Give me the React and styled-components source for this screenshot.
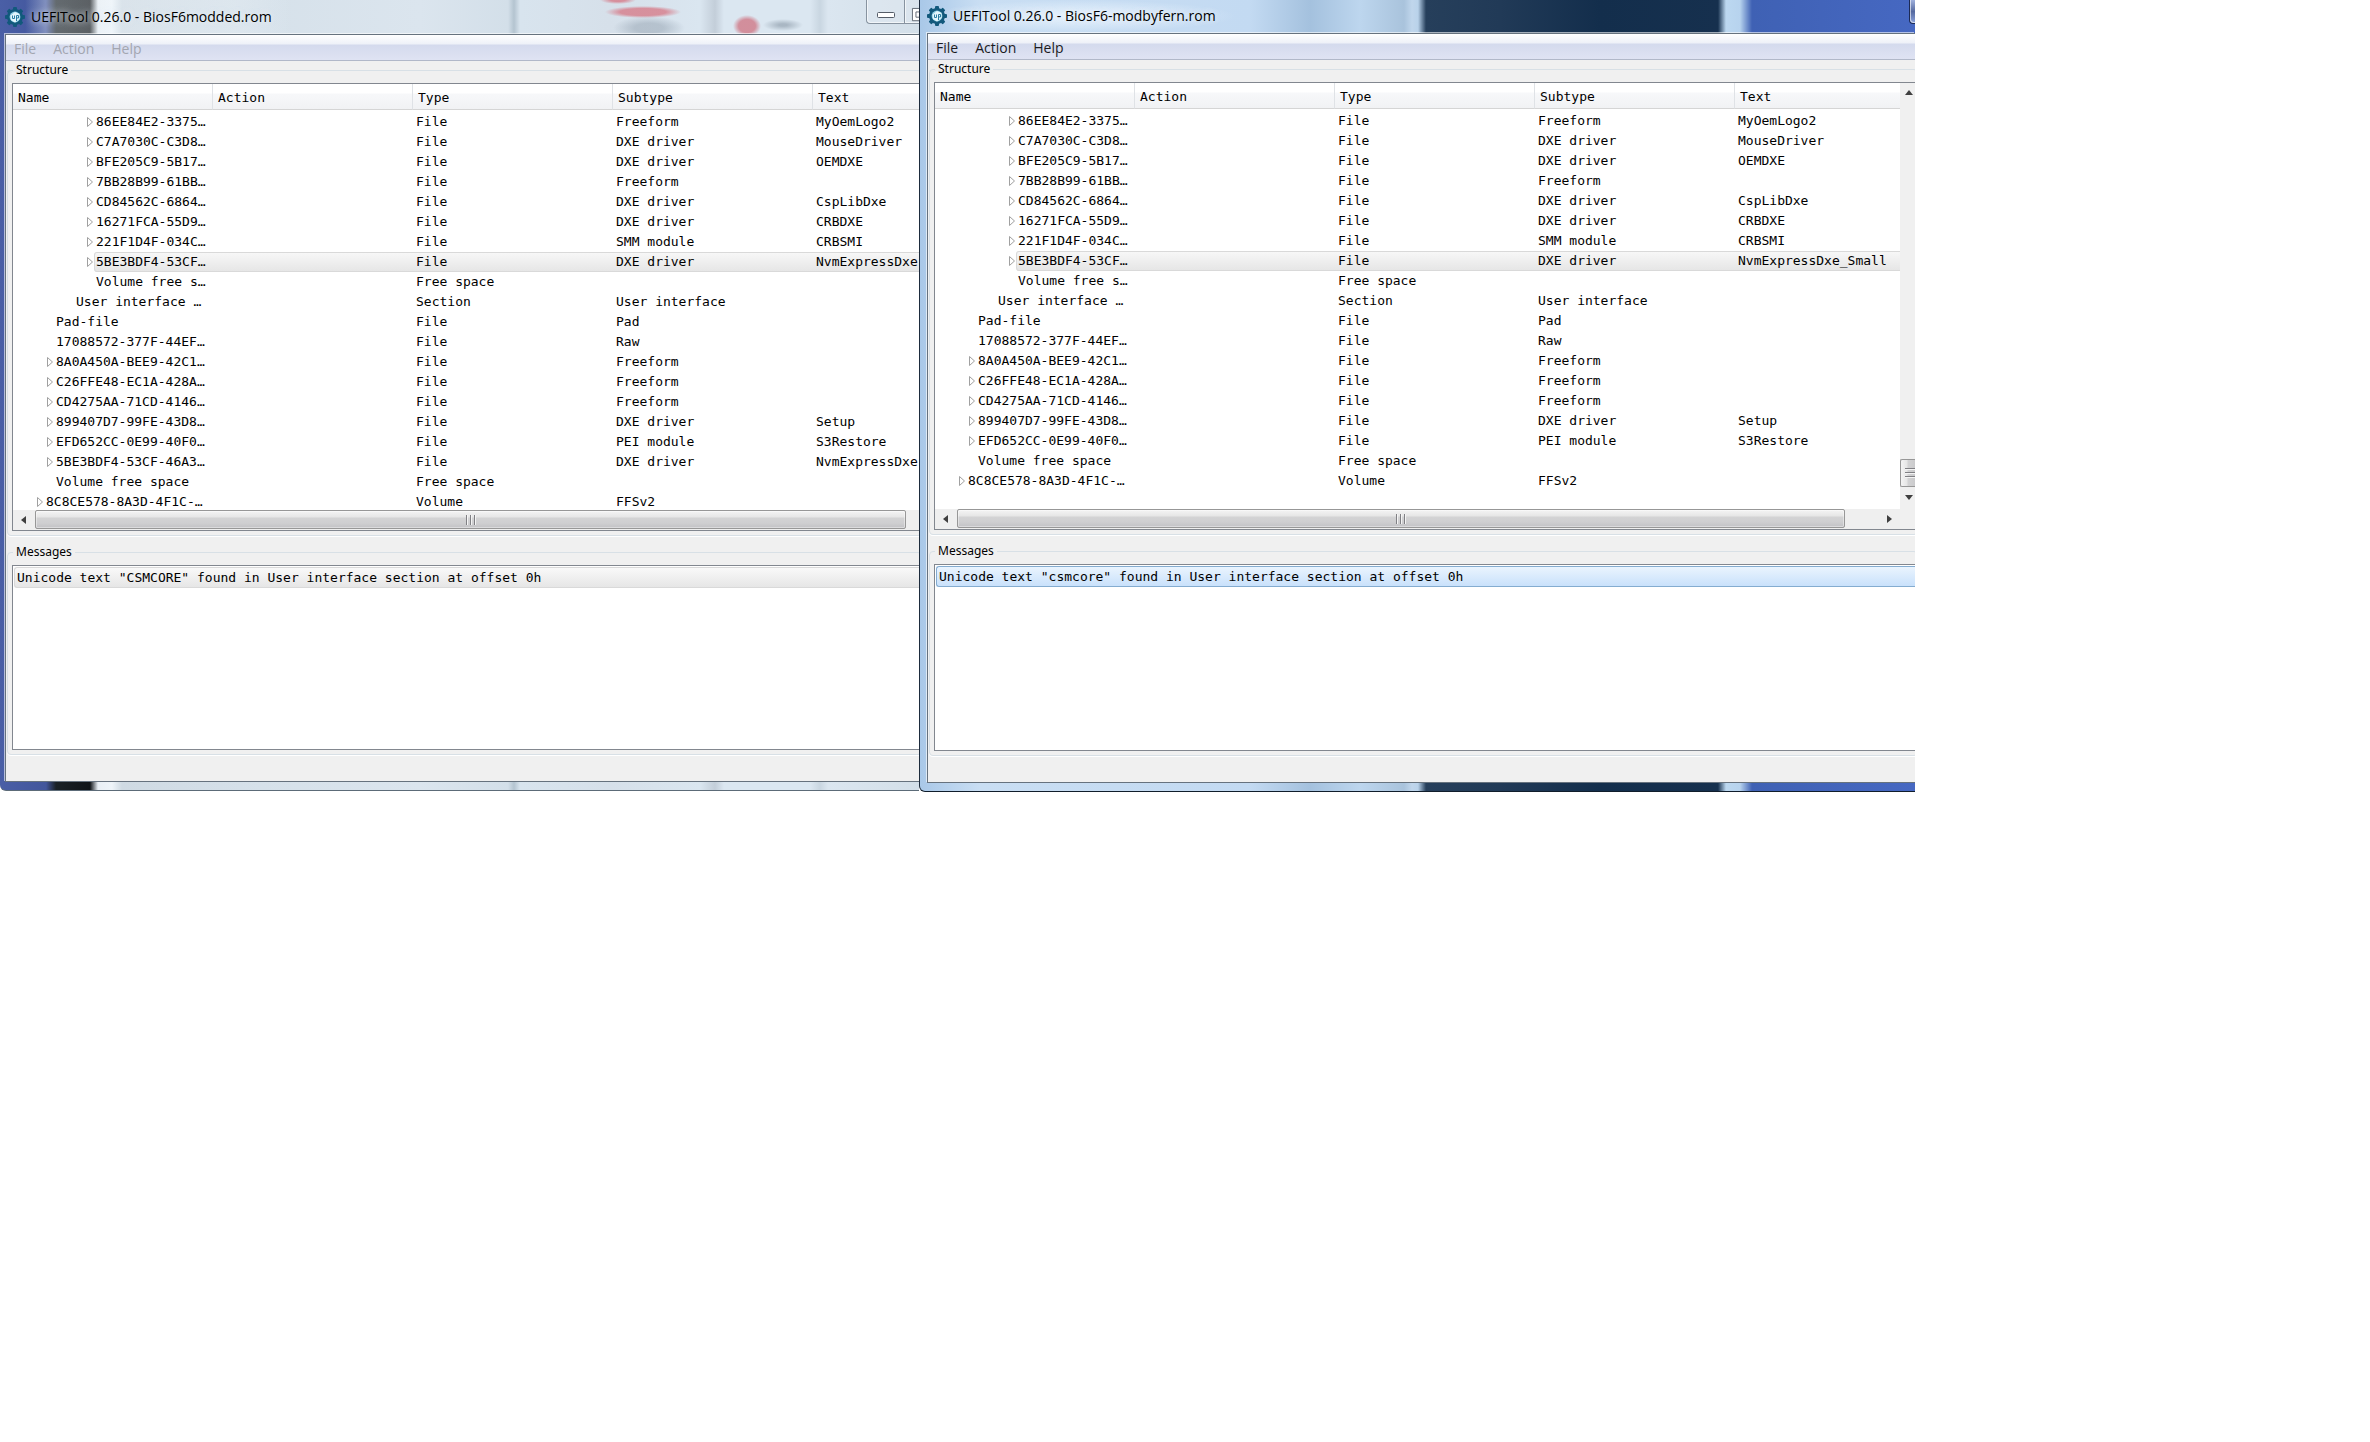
import React from 'react';
import styled, { createGlobalStyle } from 'styled-components';

const MONO = '"DejaVu Sans Mono", monospace';
const UI = '"Open Sans", "Noto Sans", sans-serif';
const LABEL = '"Noto Sans", sans-serif';

const GlobalStyle = createGlobalStyle`
  * { box-sizing: border-box; }
  body { margin: 0; background: #fff; color: #000; font-family: ${UI}; }
`;

const Desktop = styled.main`
  display: grid;
  grid-template-columns: 919fr 996fr 455fr;
  align-items: start;
`;

const GLASS_IDLE = `linear-gradient(90deg, #4a5fa6 0, #42569c 46px, #1a2126 56px, #101418 90px,
  #e9eff5 98px, #eef4f9 112px, #cfdae3 122px, #d6e1ea 260px, #dbe5ee 420px, #d3dfe9 508px,
  #b4c4d0 514px, #d8e4ee 520px, #d6e0ea 610px, #dae6f0 700px, #c3ced9 715px, #dbe7f1 724px,
  #dbe7f1 810px, #c9d6e1 820px, #dbe6f0 828px, #d3dfe9 100%)`;
const GLASS_ACTIVE = `linear-gradient(90deg, #a9c8e8 0, #c9def3 60px, #c3daf2 330px, #a4c1de 390px,
  #bdd6ee 440px, #a9c3dc 484px, #c0d6ec 492px, #b9d2ea 498px, #263f5b 506px, #213a57 580px,
  #132e4c 680px, #16304e 798px, #bcd8f0 806px, #b7d3ee 820px, #3f61b4 832px, #4668c2 100%)`;

const SMUDGES = `radial-gradient(ellipse 38px 6px at 638px 12px, rgba(214,90,105,.6) 60%, rgba(214,90,105,0)),
  radial-gradient(ellipse 18px 4px at 613px 0, rgba(214,90,105,.6) 40%, rgba(214,90,105,0)),
  radial-gradient(ellipse 36px 12px at 644px 28px, rgba(130,145,160,.4) 40%, rgba(130,145,160,0)),
  radial-gradient(ellipse 14px 11px at 742px 26px, rgba(205,95,110,.65) 60%, rgba(205,95,110,0)),
  radial-gradient(ellipse 20px 6px at 778px 25px, rgba(120,135,150,.5) 20%, rgba(120,135,150,0))`;

const Window = styled.section`
  display: flex;
  flex-direction: column;
  min-width: 0;
  height: ${p => (p.$active ? 792 : 791)}px;
  overflow: hidden;
  padding: 0 0 8px ${p => (p.$active ? 7 : 5)}px;
  border-left: ${p => (p.$active ? '1px solid #1d2b3c' : 'none')};
  border-bottom: ${p => (p.$active ? '1px solid #101d2b' : '1px solid #5c6b78')};
  border-bottom-left-radius: 6px;
  background: ${p => (p.$active ? GLASS_ACTIVE : GLASS_IDLE)};
`;

const TitleBar = styled.header`
  display: flex;
  flex: none;
  justify-content: space-between;
  align-items: flex-start;
  height: ${p => (p.$active ? 33 : 34)}px;
  background: ${p => (p.$active ? 'none' : SMUDGES)};
`;

const Caption = styled.div`
  display: flex;
  align-items: center;
  gap: 6px;
  height: ${p => (p.$active ? 32 : 34)}px;
  padding-right: 20px;
  background: ${p => (p.$active
    ? 'radial-gradient(closest-side, rgba(240,248,255,.85), rgba(240,248,255,0))'
    : 'linear-gradient(90deg, rgba(240,246,250,0) 20px, rgba(240,246,250,.35) 40px, rgba(240,246,250,.3) 80%, rgba(240,246,250,0))')};
`;

const Title = styled.h1`
  margin: 0;
  font: 400 14px/20px ${UI};
  white-space: nowrap;
  text-shadow: 0 0 6px rgba(235, 243, 250, .8), 0 0 10px rgba(235, 243, 250, .6);
`;

const CaptionButtons = styled.div`
  display: flex;
  height: 24px;
  overflow: hidden;
`;

const CaptionButton = styled.button`
  flex: none;
  display: flex;
  justify-content: center;
  align-items: center;
  width: ${p => p.$width}px;
  height: 24px;
  padding: 6px 0 0;
  overflow: hidden;
  border: 1px solid ${p => (p.$dark ? '#1c2a55' : '#8793a0')};
  border-width: 0 0 1px 1px;
  border-bottom-left-radius: ${p => (p.$first ? 4 : 0)}px;
  background: ${p => (p.$dark ? 'linear-gradient(#9fb0dc, #55699f 50%, #8ba2dc)' : 'rgba(226,234,242,.5)')};
  box-shadow: inset 1px -1px 0 rgba(255, 255, 255, .6);
`;

const Client = styled.div`
  display: flex;
  flex: 1;
  flex-direction: column;
  min-height: 0;
  border: 1px solid #66727e;
  border-right: 0;
  background: #f0f0f0;
  box-shadow: -1px -1px 0 rgba(255, 255, 255, .6);
`;

const MenuBar = styled.nav`
  display: flex;
  flex: none;
  gap: 1px;
  height: 26px;
  border-bottom: 1px solid #b1b8c9;
  background: linear-gradient(#fff 0, #eef1f8 9px, #d4daed 10px, #dfe3f3 100%);
`;

const MenuItem = styled.button`
  padding: 2px 8px 0;
  border: 0;
  background: none;
  color: ${p => (p.$dim ? '#a3a6b0' : '#1b1b1f')};
  font: 400 14px/22px ${UI};
`;

const Group = styled.fieldset`
  flex: none;
  min-width: 0;
  margin: 1px -3px 0 1px;
  padding: ${p => p.$top}px 0 4px 4px;
  border: 1px solid #d8e0e6;
  border-radius: 4px;
  box-shadow: 0 1px 0 #fff;
`;

const Legend = styled.legend`
  height: 16px;
  margin-left: 1px;
  padding: 0 3px;
  font: 400 12px/16px ${LABEL};
`;

const Messages = styled(Group)`
  margin-top: 8px;
`;

const Tree = styled.div`
  display: flex;
  border: 1px solid #82878f;
  border-right: 0;
  background: #fff;
`;

const TreeMain = styled.div`
  flex: 1;
  min-width: 0;
`;

const Viewport = styled.div`
  height: 426px;
  overflow: hidden;
`;

const Table = styled.table`
  width: 100%;
  table-layout: fixed;
  border-collapse: separate;
  border-spacing: 0;
  font: 400 13px/20px ${MONO};

  thead::after { content: ''; display: block; height: 2px; }
`;

const Column = styled.col`
  width: ${p => (p.$width ? `${p.$width}px` : 'auto')};
`;

const HeadCell = styled.th`
  height: 26px;
  padding: 3px 0 0 5px;
  border-right: 1px solid #dfe2e6;
  border-bottom: 1px solid #d5d5d5;
  background: linear-gradient(#fff 0, #fff 9px, #f7f8fa 10px, #f1f2f4 100%);
  text-align: left;
  font-weight: 400;

  &:last-child { border-right: 0; }
`;

const Cell = styled.td`
  height: 20px;
  padding: 0 0 0 3px;
  overflow: hidden;
  white-space: pre;
  ${p => p.$selected && `
    background: linear-gradient(#f8f8f8, #e5e5e5);
    box-shadow: inset 0 1px 0 #d9d9d9, inset 0 -1px 0 #d9d9d9;
  `}
`;

const NameCell = styled(Cell)`
  padding: 0 0 0 ${p => p.$depth * 10 + 13}px;
`;

const NameBox = styled.div`
  display: flex;
  align-items: center;
  height: 20px;
`;

const Expander = styled.span`
  display: flex;
  flex: none;
  width: 8px;
`;

const Label = styled.span`
  flex: 1;
  padding-left: 2px;
  ${p => p.$selected && `
    border-left: 1px solid #d9d9d9;
    border-radius: 3px 0 0 3px;
    padding-left: 1px;
    background: linear-gradient(#f8f8f8, #e5e5e5);
    box-shadow: inset 0 1px 0 #d9d9d9, inset 0 -1px 0 #d9d9d9;
  `}
`;

const HScroll = styled.div`
  display: flex;
  align-items: flex-start;
  height: 20px;
  background: #efefef;
`;

const ScrollButton = styled.button`
  display: flex;
  flex: none;
  justify-content: center;
  align-items: center;
  width: ${p => p.$width || 22}px;
  height: 19px;
  padding: 0;
  border: 0;
  background: none;
`;

const HThumb = styled.div`
  display: flex;
  flex: 1;
  justify-content: center;
  align-items: center;
  height: 19px;
  border: 1px solid #979797;
  border-radius: 2px;
  background: linear-gradient(#f4f4f4 0, #e6e6e6 6px, #d3d3d4 7px, #cfcfd1 12px, #c2c2c5 100%);
  box-shadow: inset 0 0 0 1px rgba(255, 255, 255, .4);
`;

const HTrackEnd = styled.div`
  flex: none;
  display: flex;
  justify-content: flex-end;
  width: ${p => p.$width}px;
`;

const VScroll = styled.div`
  display: flex;
  flex: none;
  flex-direction: column;
  width: 17px;
  padding: 0 0 23px 0;
  overflow: hidden;
  background: #f0f0f0;
`;

const VTrack = styled.div`
  flex: 1;
`;

const VThumb = styled.div`
  display: flex;
  align-items: center;
  height: 28px;
  padding-left: 4px;
  border: 1px solid #979797;
  border-right: 0;
  border-radius: 2px 0 0 2px;
  background: linear-gradient(90deg, #f4f4f4 0, #e6e6e6 6px, #d3d3d4 7px, #c8c8ca 100%);
`;

const MessageList = styled.ul`
  height: ${p => p.$height}px;
  margin: 0;
  padding: 1px 0 0 1px;
  border: 1px solid #82878f;
  border-right: 0;
  background: #fff;
  list-style: none;
`;

const MessageItem = styled.li`
  height: 21px;
  padding-left: 2px;
  border: 1px solid ${p => (p.$active ? '#84acd0' : '#d9d9d9')};
  border-right: 0;
  border-radius: 3px 0 0 3px;
  background: ${p => (p.$active
    ? 'linear-gradient(#eaf4fe, #c9e1fb)'
    : 'linear-gradient(#f9f9f9, #e6e6e6)')};
  font: 400 13px/19px ${MONO};
  white-space: pre;
`;

const GearIcon = () => (
  <svg width="20" height="20" viewBox="0 0 20 20" aria-hidden="true">
    <g fill="#12597c">
      {[0, 45, 90, 135].map(a => (
        <rect key={a} x="8" y="0" width="4" height="20" rx="1" transform={`rotate(${a} 10 10)`} />
      ))}
      <circle cx="10" cy="10" r="8" />
    </g>
    <circle cx="10" cy="10" r="5.4" fill="#8fd0e6" />
    <path d="M5.500 8.500L10 5l4.500 2v5L10 15.500 6 13z" fill="#e4f6fc" />
    <path d="M7.500 8.500v3h2v-3M11.500 14V8.500h2v2.500h-2" fill="none" stroke="#2b7fa3" />
  </svg>
);

const Triangle = () => (
  <svg width="8" height="12" viewBox="0 0 8 12" aria-hidden="true">
    <path d="M1.500 1.500v9L6.500 6z" fill="#fff" stroke="#a0a0a0" />
  </svg>
);

const ARROWS = {
  left: 'M7 1v8L2 5z',
  right: 'M3 1v8l5-4z',
  up: 'M1 7h8L5 2z',
  down: 'M1 3h8L5 8z',
};

const Arrow = ({ dir }) => (
  <svg width="10" height="10" viewBox="0 0 10 10" aria-hidden="true">
    <path d={ARROWS[dir]} fill="#3f3f3f" />
  </svg>
);

const Grip = ({ vertical }) => (
  <svg width="12" height="12" viewBox="0 0 12 12" aria-hidden="true">
    <path
      d={vertical ? 'M0 1.500h12M0 5.500h12M0 9.500h12' : 'M1.500 1v10M5.500 1v10M9.500 1v10'}
      stroke="#808084"
    />
    <path
      d={vertical ? 'M0 2.500h12M0 6.500h12M0 10.500h12' : 'M2.500 1v10M6.500 1v10M10.500 1v10'}
      stroke="#f4f4f4"
    />
  </svg>
);

const row = (depth, open, name, type, subtype = '', text = '') => ({ depth, open, name, type, subtype, text });

const commonRows = selectedText => [
  row(6, true, '86EE84E2-3375…', 'File', 'Freeform', 'MyOemLogo2'),
  row(6, true, 'C7A7030C-C3D8…', 'File', 'DXE driver', 'MouseDriver'),
  row(6, true, 'BFE205C9-5B17…', 'File', 'DXE driver', 'OEMDXE'),
  row(6, true, '7BB28B99-61BB…', 'File', 'Freeform'),
  row(6, true, 'CD84562C-6864…', 'File', 'DXE driver', 'CspLibDxe'),
  row(6, true, '16271FCA-55D9…', 'File', 'DXE driver', 'CRBDXE'),
  row(6, true, '221F1D4F-034C…', 'File', 'SMM module', 'CRBSMI'),
  { ...row(6, true, '5BE3BDF4-53CF…', 'File', 'DXE driver', selectedText), selected: true },
  row(6, false, 'Volume free s…', 'Free space'),
  row(4, false, 'User interface …', 'Section', 'User interface'),
  row(2, false, 'Pad-file', 'File', 'Pad'),
  row(2, false, '17088572-377F-44EF…', 'File', 'Raw'),
  row(2, true, '8A0A450A-BEE9-42C1…', 'File', 'Freeform'),
  row(2, true, 'C26FFE48-EC1A-428A…', 'File', 'Freeform'),
  row(2, true, 'CD4275AA-71CD-4146…', 'File', 'Freeform'),
  row(2, true, '899407D7-99FE-43D8…', 'File', 'DXE driver', 'Setup'),
  row(2, true, 'EFD652CC-0E99-40F0…', 'File', 'PEI module', 'S3Restore'),
];

const tailRows = [
  row(2, false, 'Volume free space', 'Free space'),
  row(1, true, '8C8CE578-8A3D-4F1C-…', 'Volume', 'FFSv2'),
];

const leftRows = [
  ...commonRows('NvmExpressDxe'),
  row(2, true, '5BE3BDF4-53CF-46A3…', 'File', 'DXE driver', 'NvmExpressDxe'),
  ...tailRows,
];
const rightRows = [...commonRows('NvmExpressDxe_Small'), ...tailRows];

const HEADERS = ['Name', 'Action', 'Type', 'Subtype', 'Text'];
const WIDTHS = [200, 200, 200, 200, null];

function ToolWindow({ active, title, rows, message, trackEnd, listHeight, children }) {
  return (
    <Window $active={active}>
      <TitleBar $active={active}>
        <Caption $active={active}>
          <GearIcon />
          <Title>{title}</Title>
        </Caption>
        <CaptionButtons>{children}</CaptionButtons>
      </TitleBar>
      <Client>
        <MenuBar>
          {['File', 'Action', 'Help'].map(m => <MenuItem key={m} $dim={!active}>{m}</MenuItem>)}
        </MenuBar>
        <Group $top={5}>
          <Legend>Structure</Legend>
          <Tree>
            <TreeMain>
              <Viewport>
                <Table>
                  <colgroup>
                    {WIDTHS.map((w, i) => <Column key={i} $width={w} />)}
                  </colgroup>
                  <thead>
                    <tr>{HEADERS.map(h => <HeadCell key={h}>{h}</HeadCell>)}</tr>
                  </thead>
                  <tbody>
                    {rows.map((r, i) => (
                      <tr key={i}>
                        <NameCell $depth={r.depth}>
                          <NameBox>
                            <Expander>{r.open && <Triangle />}</Expander>
                            <Label $selected={r.selected}>{r.name}</Label>
                          </NameBox>
                        </NameCell>
                        <Cell $selected={r.selected} />
                        <Cell $selected={r.selected}>{r.type}</Cell>
                        <Cell $selected={r.selected}>{r.subtype}</Cell>
                        <Cell $selected={r.selected}>{r.text}</Cell>
                      </tr>
                    ))}
                  </tbody>
                </Table>
              </Viewport>
              <HScroll>
                <ScrollButton aria-label="Scroll left"><Arrow dir="left" /></ScrollButton>
                <HThumb><Grip /></HThumb>
                <HTrackEnd $width={trackEnd}>
                  {active && <ScrollButton aria-label="Scroll right"><Arrow dir="right" /></ScrollButton>}
                </HTrackEnd>
              </HScroll>
            </TreeMain>
            {active && (
              <VScroll>
                <ScrollButton $width={18} aria-label="Scroll up"><Arrow dir="up" /></ScrollButton>
                <VTrack />
                <VThumb><Grip vertical /></VThumb>
                <ScrollButton $width={18} aria-label="Scroll down"><Arrow dir="down" /></ScrollButton>
              </VScroll>
            )}
          </Tree>
        </Group>
        <Messages $top={5}>
          <Legend>Messages</Legend>
          <MessageList $height={listHeight}>
            <MessageItem $active={active}>{message}</MessageItem>
          </MessageList>
        </Messages>
      </Client>
    </Window>
  );
}

export default function App() {
  return (
    <>
      <GlobalStyle />
      <Desktop>
        <ToolWindow
          title="UEFITool 0.26.0 - BiosF6modded.rom"
          rows={leftRows}
          message={'Unicode text "CSMCORE" found in User interface section at offset 0h'}
          trackEnd={15}
          listHeight={185}
        >
          <CaptionButton $width={38} $first aria-label="Minimize">
            <svg width="18" height="6" viewBox="0 0 18 6" aria-hidden="true">
              <rect x=".5" y=".5" width="17" height="5" rx="1" fill="#fff" stroke="#555d68" />
            </svg>
          </CaptionButton>
          <CaptionButton $width={15} aria-label="Maximize">
            <svg width="16" height="16" viewBox="0 0 16 16" aria-hidden="true">
              <path d="M23 .5H8.500v14H23" fill="#fff" stroke="#555d68" />
              <path d="M23 4.500H12.500v6H23" fill="none" stroke="#555d68" />
            </svg>
          </CaptionButton>
        </ToolWindow>
        <ToolWindow
          active
          title="UEFITool 0.26.0 - BiosF6-modbyfern.rom"
          rows={rightRows}
          message={'Unicode text "csmcore" found in User interface section at offset 0h'}
          trackEnd={55}
          listHeight={187}
        >
          <CaptionButton $width={6} $first $dark aria-label="Minimize" />
        </ToolWindow>
      </Desktop>
    </>
  );
}
